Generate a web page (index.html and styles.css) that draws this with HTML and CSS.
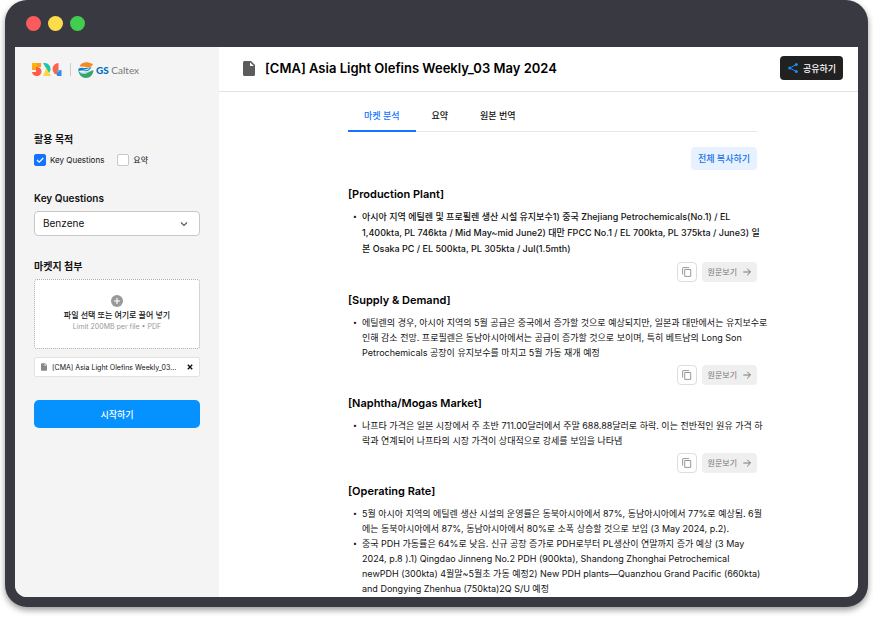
FILE: index.html
```html
<!DOCTYPE html>
<html lang="ko">
<head>
<meta charset="utf-8">
<title>Asia Light Olefins Weekly</title>
<meta name="viewport" content="width=device-width, initial-scale=1">
<link rel="stylesheet" href="styles.css">
</head>
<body>
<svg class="sprite" aria-hidden="true">
  <symbol id="file" viewBox="0 0 12 15"><path d="M1.5 0H8l4 4v9.500a1.500 1.500 0 0 1-1.500 1.500h-9A1.500 1.500 0 0 1 0 13.500v-12A1.500 1.500 0 0 1 1.500 0z" fill="currentColor"/><path d="M7 1.200V5h3.800z" fill="#fff"/></symbol>
  <symbol id="copy" viewBox="0 0 10 10"><path d="M.6 7.500V1.100Q.6.6 1.100.6H7M2.700 2.500h6v6.900h-6z" fill="none" stroke="currentColor" stroke-width="1"/></symbol>
  <symbol id="arrow" viewBox="0 0 8 8"><path d="M.3 4h7M4.200.7 7.500 4 4.200 7.300" fill="none" stroke="currentColor" stroke-width="1"/></symbol>
</svg>
<div class="window">
  <div class="titlebar"><i class="dot red"></i><i class="dot yellow"></i><i class="dot green"></i></div>
  <div class="app">
    <aside class="sidebar">
      <div class="logos">
        <svg class="mark" viewBox="0 0 30 13" role="img" aria-label="524">
          <path d="M0 0h5v7H0z" fill="#ffb400"/><path d="M5 0h4v4H5z" fill="#ff9a1e"/><path d="M0 9h4V4h1a4.500 4.500 0 0 1 0 9 5 5 0 0 1-5-4z" fill="#ff5b45"/><path d="M0 3h4v4H0z" fill="#ffa51e"/>
          <path d="M11 0h2a6 6 0 0 1 5.500 6.500L17 10z" fill="#1cc7a5"/><path d="M14.500 5 19 13h-8z" fill="#ffd53e"/><path d="M14.500 5 18.500 6.500 17 9.500z" fill="#1cc7a5"/>
          <path d="M26.500 0v12a6 6 0 0 1 0-12z" fill="#ff6248"/><path d="M25 7h4.500v6H25z" fill="#2f8de4"/><path d="M25 7h4.500L25 10z" fill="#57b2ed"/>
        </svg>
        <i class="divider"></i>
        <div class="gs">
          <svg viewBox="0 0 16 16" aria-hidden="true">
            <path d="M1.500 4.500C3 1 7-.3 10.500.6L15 2c-1 3-4 4-7 3.200C5 4.300 3 4.500 1.500 4.500z" fill="#f48a20"/>
            <path d="M.5 6.500c4-2 7 1 13-1.500C12 9 8 10 3.500 8.500L.3 9z" fill="#0a82cf"/>
            <path d="M3 8c3.500.5 6-1.500 9-2-1.500 2-5 3-9 2z" fill="#f5f5f5"/>
            <path d="M.4 8.500C2 11 5 12.500 8 11.500c3-1 4-3 7.500-3C15 13 12 16 8 16S.8 13 .4 8.500z" fill="#35a66a"/>
            <path d="M2 10.500c3 2.300 7 1.500 10-1.500-2 .5-4 1.500-6 1.700z" fill="#8fd0e8"/>
          </svg>
          <span><b>GS</b> Caltex</span>
        </div>
      </div>
      <form class="form">
        <fieldset class="group">
          <legend class="label">활용 목적</legend>
          <div class="checks">
            <label class="check"><input type="checkbox" checked>Key Questions</label>
            <label class="check"><input type="checkbox">요약</label>
          </div>
        </fieldset>
        <div class="group">
          <label class="label" for="question">Key Questions</label>
          <select id="question" class="select"><option>Benzene</option></select>
        </div>
        <div class="group">
          <h2 class="label">마켓지 첨부</h2>
          <button type="button" class="dropzone">
            <svg viewBox="0 0 12 12" aria-hidden="true"><circle cx="6" cy="6" r="6" fill="#999"/><path d="M6 3v6M3 6h6" stroke="#fff" stroke-width="1.200"/></svg>
            <strong>파일 선택 또는 여기로 끌어 넣기</strong>
            <small>Limit 200MB per file • PDF</small>
          </button>
          <div class="attachment">
            <svg class="attachment-icon"><use href="#file"/></svg>
            <span>[CMA] Asia Light Olefins Weekly_03...</span>
            <button type="button" aria-label="삭제"><svg viewBox="0 0 6 6"><path d="m.8.800 4.400 4.400M5.200.8.800 5.200" stroke="#111" stroke-width="1.400"/></svg></button>
          </div>
        </div>
        <button type="button" class="submit">시작하기</button>
      </form>
    </aside>
    <main class="main">
      <header class="header">
        <svg class="header-icon" aria-hidden="true"><use href="#file"/></svg>
        <h1>[CMA] Asia Light Olefins Weekly_03 May 2024</h1>
        <button type="button" class="share">
          <svg viewBox="0 0 10 10" aria-hidden="true"><path d="M8.300 1.600 1.600 5l6.700 3.400" fill="none" stroke="#1c8df0" stroke-width="1"/><g fill="#1c8df0"><circle cx="8.300" cy="1.600" r="1.500"/><circle cx="1.700" cy="5" r="1.500"/><circle cx="8.300" cy="8.400" r="1.500"/></g></svg>
          공유하기
        </button>
      </header>
      <div class="content">
        <nav class="tabs"><a class="active" href="#analysis">마켓 분석</a><a href="#summary">요약</a><a href="#source">원본 번역</a></nav>
        <button type="button" class="copy-all">전체 복사하기</button>
        <section class="topic lead">
          <h3>[Production Plant]</h3>
          <ul><li>아시아 지역 에틸렌 및 프로필렌 생산 시설 유지보수1) 중국 Zhejiang Petrochemicals(No.1) / EL<br>1,400kta, PL 746kta / Mid May~mid June2) 대만 FPCC No.1 / EL 700kta, PL 375kta / June3) 일<br>본 Osaka PC / EL 500kta, PL 305kta / Jul(1.5mth)</li></ul>
          <div class="actions"><button type="button" class="copy" aria-label="복사"><svg><use href="#copy"/></svg></button><button type="button" class="view">원문보기<svg><use href="#arrow"/></svg></button></div>
        </section>
        <section class="topic">
          <h3>[Supply &amp; Demand]</h3>
          <ul><li>에틸렌의 경우, 아시아 지역의 5월 공급은 중국에서 증가할 것으로 예상되지만, 일본과 대만에서는 유지보수로<br>인해 감소 전망. 프로필렌은 동남아시아에서는 공급이 증가할 것으로 보이며, 특히 베트남의 Long Son<br>Petrochemicals 공장이 유지보수를 마치고 5월 가동 재개 예정</li></ul>
          <div class="actions"><button type="button" class="copy" aria-label="복사"><svg><use href="#copy"/></svg></button><button type="button" class="view">원문보기<svg><use href="#arrow"/></svg></button></div>
        </section>
        <section class="topic">
          <h3>[Naphtha/Mogas Market]</h3>
          <ul><li>나프타 가격은 일본 시장에서 주 초반 711.00달러에서 주말 688.88달러로 하락. 이는 전반적인 원유 가격 하<br>락과 연계되어 나프타의 시장 가격이 상대적으로 강세를 보임을 나타냄</li></ul>
          <div class="actions"><button type="button" class="copy" aria-label="복사"><svg><use href="#copy"/></svg></button><button type="button" class="view">원문보기<svg><use href="#arrow"/></svg></button></div>
        </section>
        <section class="topic">
          <h3>[Operating Rate]</h3>
          <ul>
            <li>5월 아시아 지역의 에틸렌 생산 시설의 운영률은 동북아시아에서 87%, 동남아시아에서 77%로 예상됨. 6월<br>에는 동북아시아에서 87%, 동남아시아에서 80%로 소폭 상승할 것으로 보임 (3 May 2024, p.2).</li>
            <li>중국 PDH 가동률은 64%로 낮음. 신규 공장 증가로 PDH로부터 PL생산이 연말까지 증가 예상 (3 May<br>2024, p.8 ).1) Qingdao Jinneng No.2 PDH (900kta), Shandong Zhonghai Petrochemical<br>newPDH (300kta) 4월말~5월초 가동 예정2) New PDH plants—Quanzhou Grand Pacific (660kta)<br>and Dongying Zhenhua (750kta)2Q S/U 예정</li>
          </ul>
        </section>
      </div>
    </main>
  </div>
</div>
</body>
</html>
```
FILE: styles.css
```css
* { box-sizing: border-box; }
body {
  margin: 0;
  height: 100vh;
  overflow: hidden;
  background: #fff;
  color: #111;
  font: 9px/15px Inter, "Noto Sans CJK KR", sans-serif;
}
button, select, input { font: inherit; color: inherit; margin: 0; }
button { border: 0; padding: 0; background: none; }
h1, h2, h3, ul, fieldset { margin: 0; padding: 0; border: 0; }
svg { display: block; flex: none; }
.sprite { position: absolute; width: 0; height: 0; }

.window {
  display: flex;
  flex-direction: column;
  height: calc(100vh - 10px);
  margin: 0 5px;
  padding: 0 10px 10px;
  border-radius: 22px;
  background: #393941;
  box-shadow: 0 3px 6px rgba(0, 0, 0, .4);
}
.titlebar { display: flex; flex: none; align-items: center; gap: 7px; height: 47px; padding-left: 11px; }
.dot { width: 15px; height: 15px; border-radius: 50%; }
.red { background: #fc5b5b; }
.yellow { background: #fbdc4b; }
.green { background: #42cc50; }
.app { display: flex; flex: 1; min-height: 0; overflow: hidden; border-radius: 0 0 12px 12px; background: #fff; }

.sidebar { flex: none; width: 204px; padding: 14px 19px; background: #f4f4f4; }
.logos { display: flex; align-items: center; height: 17px; margin-left: -2px; }
.mark { width: 30px; height: 13px; }
.divider { width: 1px; height: 13px; margin: 0 7px 0 8px; background: #ccc; }
.gs { display: flex; align-items: center; gap: 2px; color: #777; font: 400 10px/16px Lato, sans-serif; }
.gs svg { width: 16px; height: 16px; }
.gs b { color: #0070bd; font-weight: 900; }
.form { margin-top: 54px; }
.group { margin-bottom: 23px; }
.label { display: block; padding: 0; margin-bottom: 6px; font-size: 10px; line-height: 14px; font-weight: 600; }
.checks { display: flex; gap: 13px; height: 16px; }
.check { display: flex; align-items: center; gap: 4px; font-size: 8px; line-height: 16px; }
.check input { appearance: none; width: 12px; height: 12px; border: 1px solid #c8c8c8; border-radius: 2px; background: #fff; }
.check input:checked {
  border-color: #1473ff;
  background: #1473ff url("data:image/svg+xml,%3Csvg xmlns='http://www.w3.org/2000/svg' viewBox='0 0 10 10'%3E%3Cpath d='M2 5l2.200 2.200L8.300 3' fill='none' stroke='white' stroke-width='1.200'/%3E%3C/svg%3E") center / 10px no-repeat;
}
.select {
  appearance: none;
  display: block;
  width: 100%;
  height: 25px;
  padding: 0 8px;
  border: 1px solid #c8c8c8;
  border-radius: 4px;
  background: #fff url("data:image/svg+xml,%3Csvg xmlns='http://www.w3.org/2000/svg' viewBox='0 0 8 8'%3E%3Cpath d='M1 2.500l3 3 3-3' fill='none' stroke='%23555' stroke-width='1.100'/%3E%3C/svg%3E") right 11px center / 8px no-repeat;
  font-size: 10px;
}
.dropzone {
  display: flex;
  flex-direction: column;
  align-items: center;
  justify-content: center;
  width: 100%;
  height: 70px;
  border: 1px dotted #aaa;
  border-radius: 3px;
  background: #fff;
}
.dropzone svg { width: 12px; height: 12px; }
.dropzone strong { margin-top: 2px; font-size: 8px; line-height: 12px; font-weight: 500; }
.dropzone small { color: #999; font-size: 7px; line-height: 12px; }
.attachment {
  display: flex;
  align-items: center;
  height: 20px;
  margin-top: 8px;
  padding: 0 6px;
  border: 1px solid #e2e2e2;
  border-radius: 2px;
  background: #fff;
  font-size: 7px;
}
.attachment-icon { width: 6px; height: 8px; margin-right: 5px; color: #888; }
.attachment span { flex: 1; white-space: nowrap; }
.attachment svg { width: 6px; height: 8px; }
.submit { display: block; width: 100%; height: 28px; border-radius: 5px; background: #0592ff; color: #fff; font-weight: 500; }

.main { flex: 1; min-width: 0; }
.header { display: flex; align-items: center; height: 45px; padding: 0 15px 2px 24px; border-bottom: 1px solid #e3e3e3; }
.header-icon { width: 12px; height: 15px; margin-right: 10px; color: #5c5c5c; }
.header h1 { flex: 1; font-size: 13px; line-height: 20px; font-weight: 600; color: #000; }
.share {
  display: flex;
  align-items: center;
  gap: 5px;
  height: 24px;
  padding: 0 7px 0 8px;
  border-radius: 4px;
  background: #212121;
  color: #fff;
  font-weight: 500;
}
.share svg { width: 10px; height: 10px; }
.content { display: flex; flex-direction: column; padding: 9px 101px 0 129px; }
.tabs { display: flex; height: 31px; border-bottom: 1px solid #e6e6e6; }
.tabs a { height: 31px; padding: 0 16px; line-height: 30px; font-weight: 500; color: #111; text-decoration: none; }
.tabs .active { border-bottom: 2px solid #1473ff; color: #1473ff; }
.copy-all { align-self: flex-end; height: 23px; margin: 15px 0 16px; padding: 0 7px; border-radius: 4px; background: #e7f1ff; color: #1473e6; font-weight: 500; }
.topic { margin-bottom: 10px; }
.topic h3 { margin-bottom: 7px; font-size: 11px; line-height: 16px; font-weight: 600; color: #000; }
.topic ul { list-style: none; }
.topic li { padding-left: 14px; white-space: nowrap; }
.topic li::before { content: "•"; float: left; width: 9px; margin-left: -9px; font-size: 7px; }
.lead li { line-height: 16px; font-weight: 500; }
.actions { display: flex; justify-content: flex-end; gap: 5px; margin-top: 5px; }
.copy { display: grid; place-items: center; width: 20px; height: 20px; border: 1px solid #ddd; border-radius: 4px; color: #999; }
.copy svg { width: 10px; height: 10px; }
.view { display: flex; align-items: center; gap: 6px; height: 20px; padding: 0 6px; border-radius: 4px; background: #efefef; color: #777; font-size: 8px; }
.view svg { width: 8px; height: 8px; }
```
